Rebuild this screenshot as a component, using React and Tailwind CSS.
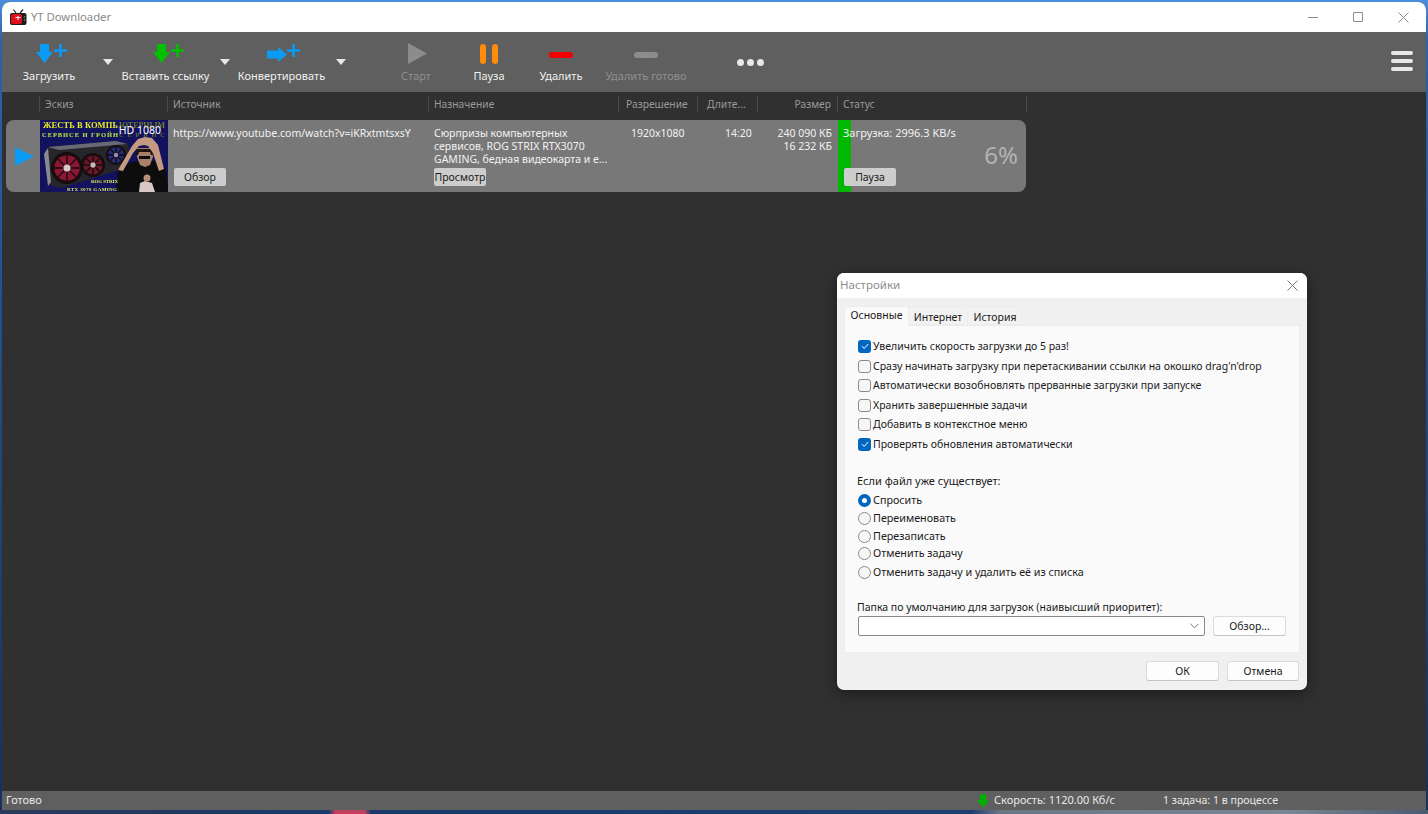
const UI_FONT = "font-['Noto_Sans',sans-serif]"

function ArrowDown({ color, className }) {
  return (
    <svg viewBox="0 0 17 19" className={className} aria-hidden="true">
      <path fill={color} d="M4 0h9v8h4L8.500 19 0 8h4z" />
    </svg>
  )
}

function PlusGlyph({ color }) {
  return (
    <svg viewBox="0 0 13 13" className="w-[13px] h-[13px]" aria-hidden="true">
      <path fill={color} d="M5.200 0h2.600v5.200H13v2.600H7.800V13H5.200V7.800H0V5.200h5.200z" />
    </svg>
  )
}

function AddIcon({ color, right }) {
  return (
    <div className="relative w-[32px] h-[24px]">
      {right ? (
        <svg viewBox="0 0 20 15" className="absolute left-[1px] top-[5px] w-[20px] h-[15px]" aria-hidden="true">
          <path fill={color} d="M0 3.500h11V0l9 7.500-9 7.500v-3.500H0z" />
        </svg>
      ) : (
        <ArrowDown color={color} className="absolute left-[3px] top-[2px] w-[17px] h-[19px]" />
      )}
      <div className="absolute left-[21px] top-[2px] flex">
        <PlusGlyph color={color} />
      </div>
    </div>
  )
}

function Caret() {
  return <div className="w-0 h-0 border-x-[5px] border-x-transparent border-t-[6px] border-t-[#e8e8e8] mt-[1px]" />
}

function ToolButton({ width, label, dim, children }) {
  return (
    <div className={`${width} h-full flex flex-col items-center shrink-0`}>
      <div className="h-[33px] pt-[10px] flex items-start justify-center">{children}</div>
      <div className={`mt-[4px] text-[11px] leading-[14px] whitespace-nowrap ${dim ? 'text-[#8f8f8f]' : 'text-[#f0f0f0]'}`}>
        {label}
      </div>
    </div>
  )
}

function DropZone({ width }) {
  return (
    <div className={`${width} h-full flex justify-center pt-[26px] shrink-0`}>
      <Caret />
    </div>
  )
}

function Toolbar() {
  return (
    <div className="h-[60px] bg-[#5f5f5f] flex items-stretch shrink-0 relative">
      <ToolButton width="w-[94px]" label="Загрузить">
        <AddIcon color="#0a9bf5" />
      </ToolButton>
      <DropZone width="w-[24px]" />
      <ToolButton width="w-[91px]" label="Вставить ссылку">
        <AddIcon color="#00c000" />
      </ToolButton>
      <DropZone width="w-[27px]" />
      <ToolButton width="w-[87px]" label="Конвертировать">
        <AddIcon color="#0a9bf5" right />
      </ToolButton>
      <DropZone width="w-[31px]" />
      <div className="w-[25px] shrink-0" />
      <ToolButton width="w-[70px]" label="Старт" dim>
        <svg viewBox="0 0 19 21" className="w-[19px] h-[21px] mt-[1px] ml-[2px]" aria-hidden="true">
          <path fill="#8c8c8c" d="M0 0l19 10.500L0 21z" />
        </svg>
      </ToolButton>
      <div className="w-[3px] shrink-0" />
      <ToolButton width="w-[70px]" label="Пауза">
        <div className="flex gap-[6px] mt-[2px]">
          <div className="w-[6px] h-[20px] rounded-full bg-[#ff8c0a]" />
          <div className="w-[6px] h-[20px] rounded-full bg-[#ff8c0a]" />
        </div>
      </ToolButton>
      <div className="w-[2px] shrink-0" />
      <ToolButton width="w-[70px]" label="Удалить">
        <div className="w-[24px] h-[6px] rounded-full bg-[#f00000] mt-[10px]" />
      </ToolButton>
      <ToolButton width="w-[100px]" label="Удалить готово" dim>
        <div className="w-[24px] h-[6px] rounded-full bg-[#8c8c8c] mt-[10px]" />
      </ToolButton>
      <div className="w-[42px] h-[16px] mt-[22px] ml-[33px] flex items-center justify-center gap-[3px] shrink-0">
        <div className="w-[7px] h-[7px] rounded-full bg-[#e8e8e8]" />
        <div className="w-[7px] h-[7px] rounded-full bg-[#e8e8e8]" />
        <div className="w-[7px] h-[7px] rounded-full bg-[#e8e8e8]" />
      </div>
      <div className="ml-auto mr-[13px] pt-[19px] flex flex-col gap-[4px] shrink-0">
        <div className="w-[22px] h-[4px] rounded-full bg-[#e8e8e8]" />
        <div className="w-[22px] h-[4px] rounded-full bg-[#e8e8e8]" />
        <div className="w-[22px] h-[4px] rounded-full bg-[#e8e8e8]" />
      </div>
    </div>
  )
}

const COLUMNS = [
  { w: 'w-[38px]', label: '' },
  { w: 'w-[128px]', label: 'Эскиз' },
  { w: 'w-[261px]', label: 'Источник' },
  { w: 'w-[190px]', label: 'Назначение' },
  { w: 'w-[79px]', label: 'Разрешение', pad: 'pl-[7px]' },
  { w: 'w-[60px]', label: 'Длите...', pad: 'pl-[9px]' },
  { w: 'w-[80px]', label: 'Размер', pad: 'justify-end pr-[6px]' },
  { w: 'w-[189px]', label: 'Статус' },
]

function TableHeader() {
  return (
    <div className="h-[24px] flex items-stretch shrink-0 text-[10.250px] text-[#9a9a9a]">
      {COLUMNS.map((c, i) => (
        <div
          key={i}
          className={`${c.w} shrink-0 flex items-center pt-[1px] border-r border-[#484848] my-[4px] ${c.pad ?? 'pl-[5px]'}`}
        >
          {c.label}
        </div>
      ))}
    </div>
  )
}

function SmallButton({ children, width }) {
  return (
    <div className={`${width} h-[18px] rounded-[2px] bg-[#cdcdcd] text-[#1c1c1c] text-[10.500px] leading-[18px] text-center whitespace-nowrap`}>
      {children}
    </div>
  )
}

// the video preview is a picture, so it stays a drawing
function Fan({ x, y, r, rim, hub }) {
  return (
    <g>
      <circle cx={x} cy={y} r={r} fill="#120a0e" />
      <circle cx={x} cy={y} r={r * 0.8} fill={rim} />
      <path
        d={`M${x - r * 0.8} ${y}L${x + r * 0.8} ${y}M${x} ${y - r * 0.8}L${x} ${y + r * 0.8}M${x - r * 0.55} ${y - r * 0.55}L${x + r * 0.55} ${y + r * 0.55}M${x + r * 0.55} ${y - r * 0.55}L${x - r * 0.55} ${y + r * 0.55}`}
        stroke="#120a0e"
        strokeWidth="1.400"
      />
      <circle cx={x} cy={y} r={r * 0.22} fill={hub} />
    </g>
  )
}

function Thumbnail() {
  return (
    <svg viewBox="0 0 128 72" className="w-[128px] h-[72px] block" aria-hidden="true">
      <defs>
        <filter id="soft">
          <feGaussianBlur stdDeviation="0.350" />
        </filter>
      </defs>
      <rect width="128" height="72" fill="#12125e" />
      <g filter="url(#soft)">
        <text x="3" y="8" fontSize="8.500" fontWeight="700" fontFamily="Liberation Serif, serif" fill="#e8ee20" textLength="75">ЖЕСТЬ В КОМПЬ</text>
        <text x="79" y="8" fontSize="8" fontWeight="700" fontFamily="Liberation Serif, serif" fill="#6f7a30" textLength="46">ЮТЕРНЫМ</text>
        <text x="2" y="17" fontSize="6.500" fontWeight="700" fontFamily="Liberation Serif, serif" fill="#b8e840" textLength="76">СЕРВИСЕ И ГРОЙН</text>
        <text x="79" y="17" fontSize="6.500" fontWeight="700" fontFamily="Liberation Serif, serif" fill="#5f6a40" textLength="46">СЕРВИС</text>
        <path fill="#26262c" d="M8 27l68-6 12 3 1 9-10 17-58 18-11-3-4-26z" />
        <path fill="#6a6a76" d="M8 27l68-6 11 3-68 6z" />
        <path fill="#8a8a94" d="M4 34l4-6 3 34-3 4z" />
        <Fan x={27} y={48} r={16} rim="#8a1430" hub="#d8c8c8" />
        <Fan x={53} y={45} r={12} rim="#6a1226" hub="#c8b8b8" />
        <Fan x={76} y={35} r={10} rim="#262a78" hub="#9090b0" />
        <path fill="#0b0b0e" d="M76 72l2-22 14-8 20-2 14 8 2 24z" />
        <path fill="#a88068" d="M97 28h15l1 9-3 8-5 2-5-2-3-8z" />
        <path fill="#1c1410" d="M97 29h15l1 6h-2l-1-3H99l-1 3h-2z" />
        <path fill="#c49a80" d="M78 50l14-24 6-7 7-2 7 1 6 7 6 24-5 2-6-18-5-7-4-1-5 1-6 7-10 18z" />
        <rect x="99" y="36" width="11" height="3" fill="#101014" />
        <path fill="#d8c8c8" d="M99 72l1-9 5-2 7 2 3 9z" />
        <circle cx="107" cy="58" r="3.500" fill="#b89078" />
        <text x="51" y="63" fontSize="5" fontWeight="700" fontFamily="Liberation Serif, serif" fill="#e4e850" textLength="27">ROG STRIX</text>
        <text x="27" y="71" fontSize="5" fontWeight="700" fontFamily="Liberation Serif, serif" fill="#e4e850" textLength="50">RTX 3070 GAMING</text>
      </g>
    </svg>
  )
}

function TaskRow() {
  return (
    <div className="h-[72px] w-[1020px] ml-[4px] mt-[4px] rounded-[8px] bg-[#787878] overflow-hidden flex relative shrink-0 text-[#f2f2f2] text-[10.500px] leading-[13px]">
      <div className="w-[34px] shrink-0 flex items-center pl-[9px]">
        <svg viewBox="0 0 19 19" className="w-[19px] h-[19px]" aria-hidden="true">
          <path fill="#0a9bf5" d="M0 0l19 9.500L0 19z" />
        </svg>
      </div>
      <div className="w-[128px] shrink-0 relative">
        <Thumbnail />
        <div className="absolute top-[4px] right-[7px] text-[10.500px] leading-[13px] text-white">HD 1080</div>
      </div>
      <div className="w-[261px] shrink-0 pl-[5px] pt-[7px] flex flex-col justify-between pb-[6px]">
        <div className="whitespace-nowrap">https://www.youtube.com/watch?v=iKRxtmtsxsY</div>
        <SmallButton width="w-[52px] ml-[1px]">Обзор</SmallButton>
      </div>
      <div className="w-[190px] shrink-0 pl-[5px] pt-[7px] flex flex-col justify-between pb-[6px]">
        <div>
          Сюрпризы компьютерных
          <br />
          сервисов, ROG STRIX RTX3070
          <br />
          GAMING, бедная видеокарта и е...
        </div>
        <SmallButton width="w-[52px]">Просмотр</SmallButton>
      </div>
      <div className="w-[79px] shrink-0 pt-[7px] pl-[12px]">1920x1080</div>
      <div className="w-[60px] shrink-0 pt-[7px] pl-[27px]">14:20</div>
      <div className="w-[80px] shrink-0 pt-[7px] text-right pr-[6px]">
        240 090 КБ
        <br />
        16 232 КБ
      </div>
      <div className="flex-1 relative pt-[6px] pl-[5px] pb-[6px] flex flex-col justify-between">
        <div className="absolute left-0 top-0 bottom-0 w-[13px] bg-[#00b800]" />
        <div className="relative text-[11px]">Загрузка: 2996.3 KB/s</div>
        <SmallButton width="w-[52px] relative ml-[1px]">Пауза</SmallButton>
        <div className="absolute right-[8px] top-[21px] text-[24px] leading-[28px] text-[#b4b4b4]">6%</div>
      </div>
    </div>
  )
}

function Check({ on, label, className }) {
  return (
    <div className={`flex items-center h-[14px] text-[10.500px] ${className ?? ''}`}>
      {on ? (
        <div className="w-[13px] h-[13px] rounded-[3px] bg-[#0067c0] flex items-center justify-center shrink-0">
          <svg viewBox="0 0 10 10" className="w-[10px] h-[10px]" aria-hidden="true">
            <path d="M2 5.200l2.200 2.200L8.200 3" fill="none" stroke="#fff" strokeWidth="1" />
          </svg>
        </div>
      ) : (
        <div className="w-[13px] h-[13px] rounded-[3px] border border-[#8a8a8a] bg-[#f6f6f6] shrink-0" />
      )}
      <span className="ml-[2px] whitespace-nowrap">{label}</span>
    </div>
  )
}

function Radio({ on, label, className }) {
  return (
    <div className={`flex items-center h-[14px] text-[10.750px] ${className ?? ''}`}>
      {on ? (
        <div className="w-[13px] h-[13px] rounded-full bg-[#0067c0] flex items-center justify-center shrink-0">
          <div className="w-[5px] h-[5px] rounded-full bg-white" />
        </div>
      ) : (
        <div className="w-[13px] h-[13px] rounded-full border border-[#8a8a8a] bg-[#f6f6f6] shrink-0" />
      )}
      <span className="ml-[2px] whitespace-nowrap">{label}</span>
    </div>
  )
}

function DialogButton({ children, width }) {
  return (
    <div className={`${width} h-[20px] rounded-[3px] bg-[#fdfdfd] border border-[#dcdcdc] border-b-[#c4c4c4] text-[10.500px] leading-[18px] text-center text-[#1a1a1a]`}>
      {children}
    </div>
  )
}

function SettingsDialog() {
  return (
    <div className="absolute left-[837px] top-[273px] w-[470px] h-[417px] rounded-[7px] bg-[#f0f0f0] shadow-[0_4px_14px_rgba(0,0,0,0.45)] flex flex-col text-[11px] leading-[14px] text-[#1a1a1a]">
      <div className="h-[25px] bg-white rounded-t-[7px] flex items-center justify-between pl-[3px] pr-[9px] shrink-0">
        <span className="text-[#8d8d8d] text-[11.500px] mt-[-1px]">Настройки</span>
        <svg viewBox="0 0 11 11" className="w-[11px] h-[11px]" aria-hidden="true">
          <path d="M.5.5l10 10M10.500.5l-10 10" stroke="#777" strokeWidth="1" fill="none" />
        </svg>
      </div>
      <div className="flex items-end h-[27px] pl-[7px] shrink-0 text-[10.500px]">
        <div className="h-[20px] w-[65px] bg-[#fafafa] border border-b-0 border-[#ececec] rounded-t-[2px] text-center leading-[16px] mb-[-1px] relative">
          Основные
        </div>
        <div className="h-[18px] w-[59px] bg-[#f2f2f2] border border-l-0 border-[#ececec] text-center leading-[18px]">Интернет</div>
        <div className="h-[18px] w-[54px] bg-[#f2f2f2] border border-l-0 border-[#ececec] text-center leading-[18px] pl-[1px]">История</div>
      </div>
      <div className="mx-[7px] h-[328px] bg-[#fafafa] border border-[#ececec] pl-[13px] pt-[13px] shrink-0">
        <Check on label="Увеличить скорость загрузки до 5 раз!" />
        <Check className="mt-[6px]" label="Сразу начинать загрузку при перетаскивании ссылки на окошко drag'n'drop" />
        <Check className="mt-[5px]" label="Автоматически возобновлять прерванные загрузки при запуске" />
        <Check className="mt-[6px]" label="Хранить завершенные задачи" />
        <Check className="mt-[5px]" label="Добавить в контекстное меню" />
        <Check on className="mt-[6px]" label="Проверять обновления автоматически" />
        <div className="mt-[23px] ml-[-1px] h-[14px]">Если файл уже существует:</div>
        <Radio on className="mt-[5px]" label="Спросить" />
        <Radio className="mt-[4px]" label="Переименовать" />
        <Radio className="mt-[4px]" label="Перезаписать" />
        <Radio className="mt-[3px]" label="Отменить задачу" />
        <Radio className="mt-[5px]" label="Отменить задачу и удалить её из списка" />
        <div className="mt-[21px] ml-[-1px] h-[14px] text-[10.500px]">Папка по умолчанию для загрузок (наивысший приоритет):</div>
        <div className="flex items-center mt-[2px]">
          <div className="w-[347px] h-[20px] bg-white border border-[#8a8a8a] rounded-[2px] flex items-center justify-end pr-[5px]">
            <svg viewBox="0 0 10 6" className="w-[9px] h-[6px]" aria-hidden="true">
              <path d="M.5.5L5 5 9.500.5" stroke="#666" fill="none" />
            </svg>
          </div>
          <DialogButton width="w-[73px] ml-[8px]">Обзор...</DialogButton>
        </div>
      </div>
      <div className="flex justify-end gap-[8px] pr-[8px] mt-[8px]">
        <DialogButton width="w-[73px]">ОК</DialogButton>
        <DialogButton width="w-[72px]">Отмена</DialogButton>
      </div>
    </div>
  )
}

function StatusBar() {
  return (
    <div className="h-[19px] bg-[#5f5f5f] flex items-center text-[11px] text-[#e8e8e8] shrink-0">
      <span className="ml-[4px]">Готово</span>
      <div className="ml-auto flex items-center">
        <ArrowDown color="#00b000" className="w-[12px] h-[16px]" />
        <span className="ml-[5px] w-[169px]">Скорость: 1120.00 Кб/с</span>
        <span className="w-[263px] text-[10.600px]">1 задача: 1 в процессе</span>
      </div>
    </div>
  )
}

function TitleBar() {
  return (
    <div className="h-[30px] bg-white rounded-t-[8px] flex items-center shrink-0">
      <svg viewBox="0 0 17 16" className="w-[17px] h-[16px] ml-[8px]" aria-hidden="true">
        <path d="M6 4L3.500 .5M10 4l3-3.500" stroke="#222" strokeWidth="1.200" fill="none" />
        <rect x="0" y="4" width="16.500" height="12" rx="2" fill="#1c1c1c" />
        <rect x="1" y="5" width="11" height="10" rx="2" fill="#e0101c" />
        <path d="M5.500 8h2V7h1v1h2v1h-2v2h-1V9h-2z" fill="#fff" />
        <circle cx="14.500" cy="8" r=".8" fill="#888" />
        <circle cx="14.500" cy="11" r=".8" fill="#888" />
      </svg>
      <span className="ml-[4px] text-[#8a8a8a] text-[11.250px]">YT Downloader</span>
      <div className="ml-auto flex items-center mr-[17px]">
        <div className="w-[10px] h-px bg-[#8a8a8a]" />
        <div className="w-[10px] h-[10px] ml-[35px] rounded-[1px] border border-[#8a8a8a]" />
        <svg viewBox="0 0 11 11" className="w-[11px] h-[11px] ml-[35px]" aria-hidden="true">
          <path d="M.5.5l10 10M10.500.5l-10 10" stroke="#8a8a8a" fill="none" />
        </svg>
      </div>
    </div>
  )
}

export default function App() {
  return (
    <div className={`${UI_FONT} h-screen w-full relative overflow-hidden bg-[linear-gradient(180deg,#4a8fdc_0%,#2a62aa_5%,#16305c_100%)] flex flex-col`}>
      <div className="flex-1 min-h-0 flex flex-col bg-[#303030] rounded-t-[8px] mt-[2px] mx-[2px]">
        <TitleBar />
        <Toolbar />
        <div className="flex-1 min-h-0 flex flex-col">
          <TableHeader />
          <TaskRow />
        </div>
        <StatusBar />
      </div>
      {/* sliver of wallpaper under the window */}
      <div className="h-[4px] shrink-0 bg-[linear-gradient(90deg,#2a3a5a_0%,#1a3a6a_23%,#c04060_23.500%,#c04060_25.500%,#1a3a6a_26%,#1f3f70_68%,#6a7684_70%,#7a8692_90%,#4a5a70_100%)]" />
      <SettingsDialog />
    </div>
  )
}
